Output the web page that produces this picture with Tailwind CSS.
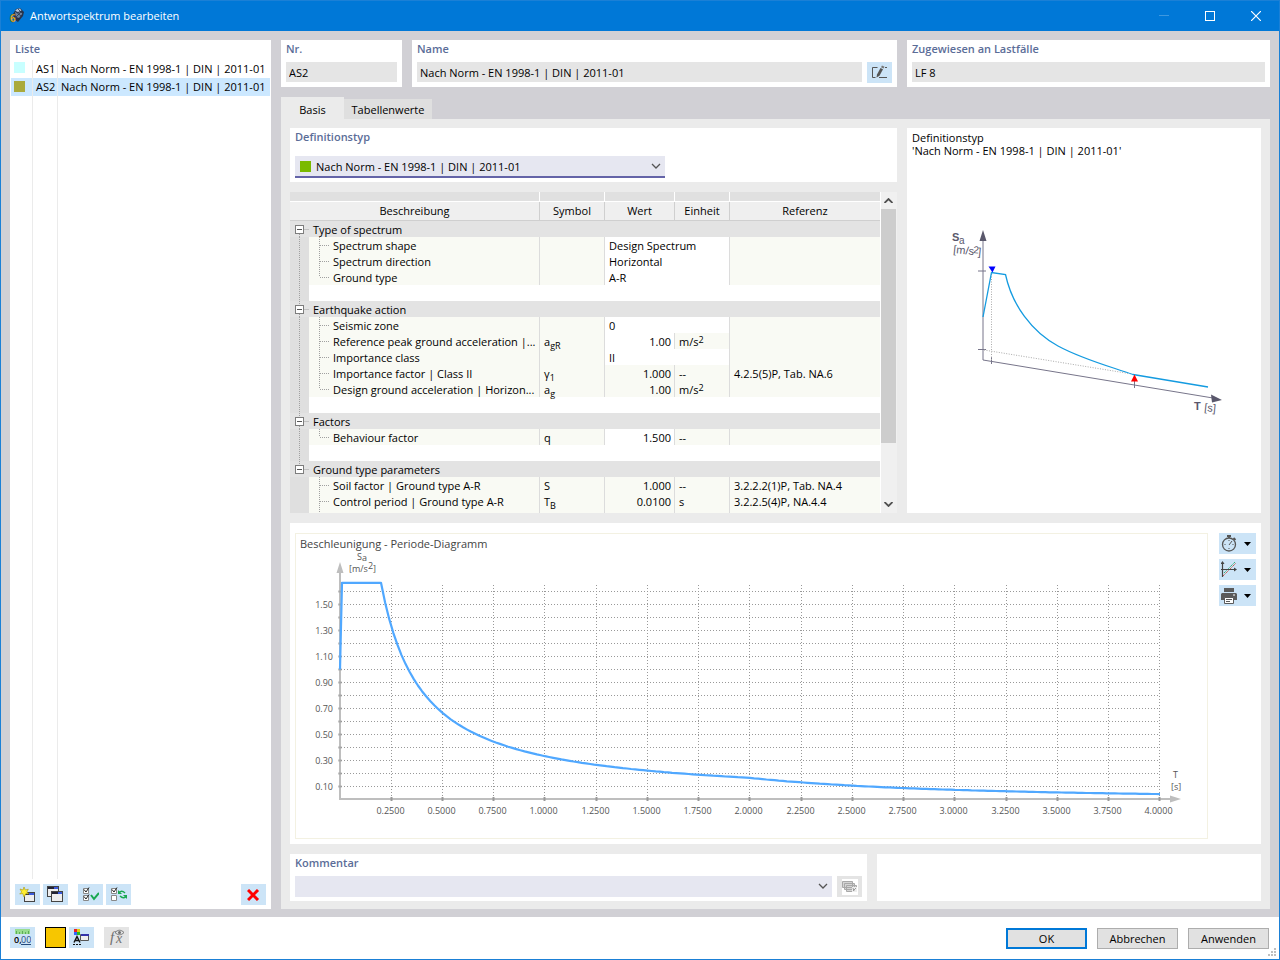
<!DOCTYPE html>
<html lang="de">
<head>
<meta charset="utf-8">
<title>Antwortspektrum bearbeiten</title>
<script src="https://cdn.jsdelivr.net/npm/@tailwindcss/browser@4"></script>
</head>
<body class="flex min-h-screen flex-col border border-[#1b80d6] bg-[#d1d0d5] font-['Open_Sans','Noto_Sans',sans-serif] text-[11px] leading-4 text-black">

<!-- Shared tree glyphs -->
<svg class="hidden" aria-hidden="true">
  <defs>
    <symbol id="box" viewBox="0 0 19 16"><path d="M14.5 8.5H19" stroke="#a0a0a0" stroke-dasharray="1 1"/><rect x="5.5" y="4.5" width="8" height="8" fill="#fff" stroke="#7d7d7d"/><path d="M7 8.5h5" stroke="#555"/></symbol>
    <symbol id="up" viewBox="0 0 19 16"><path d="M9.500 0v4" stroke="#a0a0a0" stroke-dasharray="1 1"/></symbol>
    <symbol id="down" viewBox="0 0 19 16"><path d="M9.500 13v3" stroke="#a0a0a0" stroke-dasharray="1 1"/></symbol>
    <symbol id="line" viewBox="0 0 19 16"><path d="M9.500 0v16" stroke="#a0a0a0" stroke-dasharray="1 1"/></symbol>
    <symbol id="branch" viewBox="0 0 24 16"><path d="M10.500 0v16M11 8.500h10" fill="none" stroke="#a0a0a0" stroke-dasharray="1 1"/></symbol>
    <symbol id="last" viewBox="0 0 24 16"><path d="M10.500 0v8M11 8.500h10" fill="none" stroke="#a0a0a0" stroke-dasharray="1 1"/></symbol>
    <symbol id="chev" viewBox="0 0 10 6"><path d="M1 1l4 4 4-4" fill="none" stroke="#555" stroke-width="1.3"/></symbol>
    <symbol id="tri" viewBox="0 0 7 4"><path d="M0 0h7L3.500 4z" fill="#000"/></symbol>
  </defs>
</svg>

<header class="flex h-[30px] shrink-0 items-center bg-[#0078d7] pl-2 text-white">
  <svg width="16" height="16" viewBox="0 0 16 16" aria-hidden="true">
    <path d="M7 1l4-1 4 4-1 4-5 6-3-2-2-6z" fill="#26334a"/><path d="M8 1l3-.5 1.500 2L9 4 6 3z" fill="#b4c4da"/><path d="M6 4l3 1 3-1.500 1.500 2L10 10l-3-1z" fill="#6f839f"/><path d="M6 3l6 5M9 1l5 5M13 3l-6 6" stroke="#26334a" stroke-width=".8" fill="none"/>
    <text x="1" y="14" font-size="10" font-weight="bold" fill="#f7bd2f" stroke="#5a430c" stroke-width=".3">6</text>
  </svg>
  <h1 class="ml-[5px] flex-1">Antwortspektrum bearbeiten</h1>
  <button class="flex h-full w-[46px] items-center justify-center" aria-label="Minimieren"><svg width="10" height="10"><path d="M0 4.500h10" stroke="#3d98e0"/></svg></button>
  <button class="flex h-full w-[46px] items-center justify-center pb-px" aria-label="Maximieren"><svg width="10" height="10"><rect x=".5" y=".5" width="9" height="9" fill="none" stroke="#fff"/></svg></button>
  <button class="flex h-full w-[46px] items-center justify-center pb-px" aria-label="Schließen"><svg width="10" height="10"><path d="M0 0l10 10M10 0L0 10" stroke="#fff" stroke-width="1.200"/></svg></button>
</header>

<main class="flex flex-1 gap-2.5 px-[9px] pt-[9px] pb-2">
  <!-- Spectrum list -->
  <aside class="flex w-[261px] shrink-0 flex-col bg-white pb-1">
    <h2 class="px-[5px] pt-px pb-[3px] font-semibold text-[#5b6d98]">Liste</h2>
    <div class="flex flex-1 flex-col px-px">
      <button class="flex h-[18px] w-full text-left leading-[18px]"><span class="h-full w-[22px] shrink-0 border-r border-[#ebebeb] pt-0.5 pl-[3px]"><span class="block size-[11px] bg-[#c8ffff]"></span></span><span class="w-[25px] shrink-0 border-r border-[#ebebeb] pl-[3px] whitespace-nowrap">AS1</span><span class="pl-[3px] whitespace-nowrap">Nach Norm - EN 1998-1 | DIN | 2011-01</span></button>
      <button class="flex h-[18px] w-full bg-[#cce8ff] text-left leading-[18px]"><span class="h-full w-[22px] shrink-0 border-r border-[#ebebeb] pt-[3px] pl-[3px]"><span class="block size-[11px] bg-[#aaaa3c]"></span></span><span class="w-[25px] shrink-0 border-r border-[#ebebeb] pl-[3px] whitespace-nowrap">AS2</span><span class="pl-[3px] whitespace-nowrap">Nach Norm - EN 1998-1 | DIN | 2011-01</span></button>
      <div class="flex flex-1"><span class="w-[22px] border-r border-[#ebebeb]"></span><span class="w-[25px] border-r border-[#ebebeb]"></span></div>
    </div>
    <div class="mt-[5px] flex px-[5px]">
      <button class="flex h-[21px] w-[25px] items-center justify-center bg-[#cce4f7]" aria-label="Neu"><svg width="17" height="16"><rect x="5.500" y="5.500" width="10" height="9" fill="#eee" stroke="#444"/><path d="M6 6h5v2H6z" fill="#223"/><path d="M10 6h5v2h-5z" fill="#3b5bdb"/><path d="M5 0l1.300 3 3-.8-1.500 2.800 2 2-3-.2L5 10 3.700 6.500l-3 .5 2-2L1 2l3 1z" fill="#ffee2e" stroke="#a89610" stroke-width=".6"/></svg></button>
      <button class="ml-[3px] flex h-[21px] w-[25px] items-center justify-center bg-[#cce4f7]" aria-label="Kopieren"><svg width="17" height="17"><rect x=".5" y=".5" width="11" height="10" fill="#eee" stroke="#444"/><path d="M1 1h6v2H1z" fill="#223"/><path d="M7 1h4v2H7z" fill="#3b5bdb"/><rect x="4.500" y="5.500" width="11" height="10" fill="#eee" stroke="#444"/><path d="M5 6h6v2H5z" fill="#223"/><path d="M11 6h4v2h-4z" fill="#3b5bdb"/></svg></button>
      <button class="ml-2.5 flex h-[21px] w-[25px] items-center justify-center bg-[#cce4f7]" aria-label="Alle auswählen"><svg width="17" height="16" fill="none"><path d="M1.500 1.500h5v5h-5zM1.500 8.500h5v5h-5z" fill="#fff" stroke="#888"/><path d="M2 2.500l2 2.500L7 .5M2 9.500l2 2.500L7 7.500" stroke="#222"/><path d="M9 8l3 4 5-6" stroke="#18a850" stroke-width="2"/></svg></button>
      <button class="ml-[3px] flex h-[21px] w-[25px] items-center justify-center bg-[#cce4f7]" aria-label="Auswahl umkehren"><svg width="17" height="16" fill="none"><path d="M1.500 1.500h5v5h-5zM1.500 8.500h5v5h-5z" fill="#fff" stroke="#888"/><path d="M2 2.500l2 2.500L7 .5" stroke="#222"/><path d="M9 5.500c2-2 4-1.500 6 .5M16 9.500c-2 2-4 1.500-6-.5" stroke="#18a850" stroke-width="1.500"/><path d="M8 3v4h4zM17 12V8h-4z" fill="#18a850"/></svg></button>
      <button class="ml-auto flex h-[21px] w-[25px] items-center justify-center bg-[#cce4f7]" aria-label="Löschen"><svg width="13" height="12"><path d="M1 1l10 10M11 1L1 11" stroke="#f00" stroke-width="3"/></svg></button>
    </div>
  </aside>

  <div class="flex min-w-0 flex-1 flex-col">
    <div class="flex gap-2.5">
      <section class="w-[121px] bg-white px-[5px] pt-px pb-[5px]">
        <label for="nr" class="block font-semibold text-[#5b6d98]">Nr.</label>
        <input id="nr" readonly value="AS2" class="mt-[5px] block h-5 w-full bg-[#e5e5e5] px-[3px]">
      </section>
      <section class="flex-1 bg-white px-[5px] pt-px pb-1">
        <label for="name" class="block font-semibold text-[#5b6d98]">Name</label>
        <div class="mt-[5px] flex gap-[5px]">
          <input id="name" readonly value="Nach Norm - EN 1998-1 | DIN | 2011-01" class="block h-5 min-w-0 flex-1 bg-[#e5e5e5] px-[3px]">
          <button class="flex h-[21px] w-[25px] items-center justify-center bg-[#cce4f7]" aria-label="Name bearbeiten"><svg width="17" height="15" fill="none"><path d="M6.500 2.500h-5v10h3M8 12.500h8M14 2.500h2" stroke="#555"/><path d="M5.500 12.500L6 9.500 9.500 3l2.500 1.200-3.500 6.500z" fill="#555"/><path d="M10 2.200l1-1.700 2.500 1.300-1 1.700z" fill="#777"/></svg></button>
        </div>
      </section>
      <section class="w-[363px] bg-white px-[5px] pt-px pb-[5px]">
        <label for="lf" class="block font-semibold text-[#5b6d98]">Zugewiesen an Lastfälle</label>
        <input id="lf" readonly value="LF 8" class="mt-[5px] block h-5 w-full bg-[#e5e5e5] px-[3px]">
      </section>
    </div>

    <div class="mt-2.5 flex items-end" role="tablist">
      <button role="tab" aria-selected="true" class="h-[22px] w-[63px] bg-[#ebebeb] pt-1">Basis</button>
      <button role="tab" aria-selected="false" class="h-5 w-[88px] bg-[#dfdfdf] pt-0.5">Tabellenwerte</button>
    </div>

    <div class="flex flex-1 flex-col gap-2.5 bg-[#ebebeb] px-[9px] pt-[9px] pb-2">
      <div class="flex gap-2.5">
        <div class="flex min-w-0 flex-1 flex-col gap-2.5">
          <section class="bg-white px-[5px] pt-px pb-1">
            <label for="def" class="block font-semibold text-[#5b6d98]">Definitionstyp</label>
            <div class="relative mt-[11px] w-[370px]">
              <select id="def" class="block h-[22px] w-full appearance-none border-b-2 border-[#6464a8] bg-[#e6e7f1] pt-0.5 pl-[21px]"><option>Nach Norm - EN 1998-1 | DIN | 2011-01</option></select>
              <span class="pointer-events-none absolute top-[5px] left-[5px] size-[11px] bg-[#7aba00]"></span>
              <svg class="pointer-events-none absolute top-[7px] right-1" width="10" height="6"><use href="#chev"/></svg>
            </div>
          </section>

          <div class="flex h-[321px] bg-white">
            <div class="min-w-0 flex-1 overflow-hidden">
              <table class="w-full table-fixed border-separate border-spacing-0 text-left [&_sub]:static [&_sub]:align-[-3px] [&_sub]:text-[9px] [&_sub]:leading-[0] [&_sup]:static [&_sup]:align-[3px] [&_sup]:text-[9px] [&_sup]:leading-[0] [&_td]:h-4 [&_td]:p-0 [&_td]:whitespace-nowrap [&_td>div]:h-4 [&_td>div]:pt-0.5 [&_td>div]:leading-[14px]">
                <colgroup><col class="w-[19px]"><col class="w-[231px]"><col class="w-[65px]"><col class="w-[70px]"><col class="w-[55px]"><col></colgroup>
                <thead class="text-center">
                  <tr class="bg-[#e0e0e0] [&>td]:h-2.5! [&>td]:border-r [&>td]:border-b [&>td]:border-white"><td colspan="2"></td><td></td><td></td><td></td><td class="border-r-0!"></td></tr>
                  <tr class="bg-[#efefef] [&>th]:h-[19px] [&>th]:border-r [&>th]:border-b [&>th]:border-[#cfcfcf] [&>th]:p-0 [&>th]:font-normal"><th colspan="2">Beschreibung</th><th>Symbol</th><th>Wert</th><th>Einheit</th><th class="border-r-0!">Referenz</th></tr>
                </thead>
                <tbody id="rows"></tbody>
              </table>
            </div>
            <div class="ml-px flex w-4 flex-col bg-[#f0f0f0]" aria-hidden="true">
              <svg class="my-1.5 ml-[3px] rotate-180" width="9" height="5" viewBox="0 0 9 5"><path d="M.5 0l4 4 4-4" fill="none" stroke="#505050" stroke-width="1.800"/></svg>
              <div class="h-[234px] w-[15px] bg-[#cdcdcd]"></div>
              <svg class="mt-auto mb-1.5 ml-[3px]" width="9" height="5" viewBox="0 0 9 5"><path d="M.5 0l4 4 4-4" fill="none" stroke="#505050" stroke-width="1.800"/></svg>
            </div>
          </div>
        </div>

        <section class="w-[354px] bg-white px-[5px] pt-[3px] leading-[13px]">
          <p>Definitionstyp</p><p>'Nach Norm - EN 1998-1 | DIN | 2011-01'</p>
          <!-- Schematic response spectrum -->
          <svg class="mx-auto mt-[63px] block font-['Liberation_Sans',sans-serif]" width="280" height="200" viewBox="944 220 280 200" fill="none">
            <path d="M983 240V360L1213 398M978 271h8M978 349.500h8M991.500 357v7M1134.500 381v7" stroke="#77758a"/>
            <path d="M983 230l3.500 11h-7zM1222 400l-11-5.500 1 8z" fill="#5a586c"/>
            <path d="M991.500 274v86M984 350l148 24" stroke="#aaa" stroke-dasharray="1 1.500"/>
            <path d="M983 317L991.500 272.500 1005.500 274.500C1012 305 1032 332 1058 346S1112 367 1133 374.500L1208 387" stroke="#149be0" stroke-width="1.300"/>
            <path d="M988.500 266.500h7l-3 6z" fill="#00f"/><path d="M1134.500 374.500l3.500 7h-7z" fill="#f00"/>
            <g fill="#5a586c" font-size="11"><text x="952" y="241" font-weight="bold">S</text><text x="959" y="244" font-size="10">a</text><g transform="rotate(6 953 253)"><text x="953" y="253">[m/s</text><text x="973" y="251" font-size="10">2</text><text x="978" y="253">]</text></g></g>
            <g fill="#5a586c" font-size="11"><text x="1194" y="410" font-weight="bold">T</text><text x="1204" y="411" transform="rotate(6 1204 411)">[s]</text></g>
          </svg>
        </section>
      </div>

      <section class="flex flex-1 gap-[11px] bg-white pt-2.5 pr-[5px] pb-[5px] pl-[5px]">
        <div class="min-w-0 flex-1 border border-[#f3f1e2]">
          <svg class="block w-full" viewBox="296 534 911 304" fill="none" role="img" aria-label="Beschleunigung - Periode-Diagramm">
            <text x="300" y="548" font-size="11" fill="#444">Beschleunigung - Periode-Diagramm</text>
            <g id="grid" stroke="#999" stroke-dasharray="1 2"></g>
            <path d="M340 570V799.500M339 799H1172" stroke="#bebebe" stroke-width="2"/>
            <path d="M340 562l3.500 11h-7zM1181 799l-11-3.500v7z" fill="#bebebe"/>
            <g id="ticks" stroke="#999" stroke-width="2"></g>
            <path id="curve" stroke="#50a8ff" stroke-width="2.200" stroke-linejoin="round"/>
            <g id="labels" font-size="9" fill="#555">
              <text x="357" y="560">S</text><text x="362" y="561">a</text><text x="349" y="572">[m/s</text><text x="368" y="569">2</text><text x="373" y="572">]</text>
              <text x="1173" y="778">T</text><text x="1171" y="790">[s]</text>
            </g>
          </svg>
        </div>
        <div class="flex w-[37px] flex-col gap-[5px]">
          <button class="flex h-[21px] items-center gap-[5px] bg-[#cce4f7] pl-0.5" aria-label="Zeit"><svg width="18" height="17" fill="none" stroke="#555"><circle cx="8" cy="9.500" r="6.500" stroke-width="1.300"/><path d="M6 1h4M8 1v2M12.500 3l2 2" stroke-width="1.800"/><path d="M8 10l3-4M8 5v1M8 13v1M3.500 9.500h1M11.500 9.500h1"/></svg><svg width="7" height="4"><use href="#tri"/></svg></button>
          <button class="flex h-[21px] items-center gap-[5px] bg-[#cce4f7] pl-0.5" aria-label="Achsen"><svg width="18" height="17" fill="none"><path d="M3 12L14 1" stroke="#35ad77" stroke-dasharray="1.500 .5"/><path d="M2 15L15 2" stroke="#c65b4a" stroke-dasharray="1.500 .5"/><path d="M1.500 1v15M0 8.500h14" stroke="#444" stroke-width="1.200"/><path d="M1.500 0L3.500 3h-4zM16 8.500L13 6.500v4z" fill="#444"/></svg><svg width="7" height="4"><use href="#tri"/></svg></button>
          <button class="flex h-[21px] items-center gap-[5px] bg-[#cce4f7] pl-0.5" aria-label="Drucken"><svg width="18" height="16"><path d="M3 0h10v4H3zM1 5h14l1 1v6H0V6z" fill="#5b5b5b"/><path d="M3.500 9.500h9v6h-9z" fill="#fff" stroke="#5b5b5b"/><path d="M5 11.500h6M5 13.500h4" stroke="#5b5b5b"/><path d="M12 7h2" stroke="#fff"/></svg><svg width="7" height="4"><use href="#tri"/></svg></button>
        </div>
      </section>

      <div class="flex gap-2.5">
        <section class="min-w-0 flex-1 bg-white px-[5px] pt-px pb-1">
          <label for="kommentar" class="block font-semibold text-[#5b6d98]">Kommentar</label>
          <div class="mt-[5px] flex gap-[5px]">
            <div class="relative flex-1">
              <select id="kommentar" class="block h-[21px] w-full appearance-none bg-[#e6e7f1]"><option></option></select>
              <svg class="pointer-events-none absolute top-[7px] right-1" width="10" height="6"><use href="#chev"/></svg>
            </div>
            <button class="flex h-[21px] w-[25px] items-center justify-center bg-[#e4e4e4]" aria-label="Kommentare"><svg width="16" height="16"><path d="M0 0h16v16H0z" fill="#fff"/><path d="M.5 2.500h10v6H.5zM2.500 4.500h10v6h-10zM4.500 6.500h10v6h-10z" fill="#d4d4d4" stroke="#a8a8a8"/><path d="M10 8h5v5h-5z" fill="#eee"/><path d="M11 12l3-3M11 9l1 3" stroke="#999"/></svg></button>
          </div>
        </section>
        <section class="w-[384px] bg-white"></section>
      </div>
    </div>
  </div>
</main>

<footer class="relative flex h-[42px] shrink-0 items-center bg-white px-[9px]">
  <div class="flex pb-px">
    <button class="flex h-[21px] w-[25px] items-center justify-center bg-[#cce4f7]" aria-label="Einheiten"><svg width="17" height="17"><path d="M1 0h15v5H1z" fill="#97dc8f"/><path d="M2.500 2v3M5.500 3v2M8.500 2v3M11.500 3v2M14.500 2v3" stroke="#5cae55"/><text x="0" y="14" font-size="9" font-weight="600">0,</text><text x="7" y="14" font-size="9" fill="#244a7d">00</text><path d="M7 15.500h10" stroke="#244a7d"/></svg></button>
    <button class="ml-2.5 size-[21px] border border-black bg-[#f7c600]" aria-label="Farbe"></button>
    <button class="ml-[3px] flex h-[21px] w-[25px] items-center justify-center bg-[#cce4f7]" aria-label="Anzeige"><svg width="17" height="17"><path d="M1 0h3v3H1z" fill="#e22"/><path d="M4 0h3v3H4z" fill="#dc1"/><path d="M1 3h3v3H1z" fill="#36f"/><path d="M4 3h3v3H4z" fill="#2b2"/><path d="M7.500 5.500h8v6h-8z" fill="#eee" stroke="#555"/><path d="M8 5h8v2H8z" fill="#33a"/><path d="M1 13.500l3-6 3 6M2.500 11.500h3" fill="none" stroke="#111" stroke-width="1.400"/><path d="M0 15.500h9" stroke="#111" stroke-dasharray="2 1"/></svg></button>
    <button class="ml-2.5 flex h-[21px] w-[25px] items-center justify-center bg-[#e4e4e4]" aria-label="Formel"><svg width="18" height="17" font-family="Liberation Serif" font-style="italic" fill="#707070"><text x="2" y="13" font-size="15">f</text><text x="8" y="14" font-size="14">x</text><path d="M7 3.500c3-3 6-3 9 0-3 3-6 3-9 0z" fill="none" stroke="#777"/><circle cx="11.500" cy="3.500" r="1.500"/></svg></button>
  </div>
  <div class="mt-px ml-auto flex gap-2.5 pr-px">
    <button class="h-[21px] w-[81px] border-2 border-[#0078d7] bg-[#e1e1e1] leading-4">OK</button>
    <button class="h-[21px] w-[81px] border border-[#adadad] bg-[#e1e1e1]">Abbrechen</button>
    <button class="h-[21px] w-[81px] border border-[#adadad] bg-[#e1e1e1]">Anwenden</button>
  </div>
  <svg class="absolute right-0.5 bottom-0.5" width="9" height="9" fill="#bfbfbf" aria-hidden="true"><path d="M6 0h2v2H6zM6 3h2v2H6zM3 3h2v2H3zM6 6h2v2H6zM3 6h2v2H3zM0 6h2v2H0z"/></svg>
</footer>

<script>
  // Parameter table: [group, rows]; row = [name, symbol, value, unit, reference, editable]
  const unit = 'm/s<sup>2</sup>';
  const groups = [
    ['Type of spectrum', [
      ['Spectrum shape', '', 'Design Spectrum', null, '', true],
      ['Spectrum direction', '', 'Horizontal', null, '', true],
      ['Ground type', '', 'A-R', null, '', true]]],
    ['Earthquake action', [
      ['Seismic zone', '', '0', null, '', true],
      ['Reference peak ground acceleration |...', 'a<sub>gR</sub>', '1.00', unit, '', true],
      ['Importance class', '', 'II', null, '', true],
      ['Importance factor | Class II', 'γ<sub>1</sub>', '1.000', '--', '4.2.5(5)P, Tab. NA.6', false],
      ['Design ground acceleration | Horizon...', 'a<sub>g</sub>', '1.00', unit, '', false]]],
    ['Factors', [
      ['Behaviour factor', 'q', '1.500', '--', '', true]]],
    ['Ground type parameters', [
      ['Soil factor | Ground type A-R', 'S', '1.000', '--', '3.2.2.2(1)P, Tab. NA.4', false],
      ['Control period | Ground type A-R', 'T<sub>B</sub>', '0.0100', 's', '3.2.2.5(4)P, NA.4.4', false],
      ['', '', '', '', '', false]]]
  ];
  const glyph = (w, ids) => `<svg class="block shrink-0" width="${w}" height="16">${ids.map(i => `<use href="#${i}"/>`).join('')}</svg>`;
  let html = '';
  groups.forEach(([title, rows], g) => {
    const end = g === groups.length - 1;
    const gutter = `<td class="bg-[#dfdfdf]">${end ? '' : glyph(19, ['line'])}</td>`;
    html += `<tr class="bg-[#e3e3e3]"><td>${glyph(19, [g ? 'up' : '', end ? '' : 'down', 'box'].filter(Boolean))}</td><td colspan="5"><div class="pl-1">${title}</div></td></tr>`;
    rows.forEach(([name, sym, val, u, ref, edit], i) => {
      const tree = glyph(24, [i === rows.length - 1 ? 'last' : 'branch']);
      html += `<tr class="bg-[#f9faf4]">${gutter}<td class="border-r border-[#dcdcdc]"><div class="flex"><span class="-mt-0.5">${tree}</span>${name}</div></td><td class="border-r border-[#dcdcdc]"><div class="pl-1">${sym}</div></td>`;
      html += u === null
        ? `<td colspan="2" class="border-r border-[#dcdcdc] bg-white"><div class="pl-1">${val}</div></td>`
        : `<td class="border-r border-[#dcdcdc] text-right ${edit ? 'bg-white' : ''}"><div class="pr-[3px]">${val}</div></td><td class="border-r border-[#dcdcdc]"><div class="pl-1">${u}</div></td>`;
      html += `<td><div class="pl-1">${ref}</div></td></tr>`;
    });
    if (!end) html += `<tr>${gutter}<td colspan="5"></td></tr>`;
  });
  document.getElementById('rows').innerHTML = html;

  // Diagram: 205 units per second, 130 units per m/s²
  const px = t => 340 + t * 205, py = s => 799.5 - s * 130;
  let grid = '', ticks = '', labels = '';
  for (let k = 1; k <= 16; k++) {
    const y = py(k / 10);
    grid += `<path d="M341 ${y}H1160"/>`;
    ticks += `<path d="M338 ${y}h4" stroke-opacity=".6"/>`;
    if (k % 2 && k < 16) labels += `<text x="333" y="${y + 3}" text-anchor="end">${(k / 10).toFixed(2)}</text>`;
    const x = Math.floor(px(k / 4)) - 0.5 + (k % 4 === 0 ? 0 : 1);
    grid += `<path d="M${x} 585V797"/>`;
    ticks += `<path d="M${x} 797v4"/>`;
    labels += `<text x="${x - 1}" y="814" text-anchor="middle">${(k / 4).toFixed(4)}</text>`;
  }
  let d = `M340 ${py(1)}L342 ${py(5 / 3)}L381 ${py(5 / 3)}`;
  for (let t = 0.2; t <= 4.001; t += 0.02) {
    const s = t < 2 ? 1 / 3 / t : 2 / 3 / t / t;
    d += `L${px(t).toFixed(1)} ${py(s).toFixed(1)}`;
  }
  document.getElementById('grid').innerHTML = grid;
  document.getElementById('ticks').innerHTML = ticks;
  document.getElementById('labels').innerHTML += labels;
  document.getElementById('curve').setAttribute('d', d);
</script>
</body>
</html>
